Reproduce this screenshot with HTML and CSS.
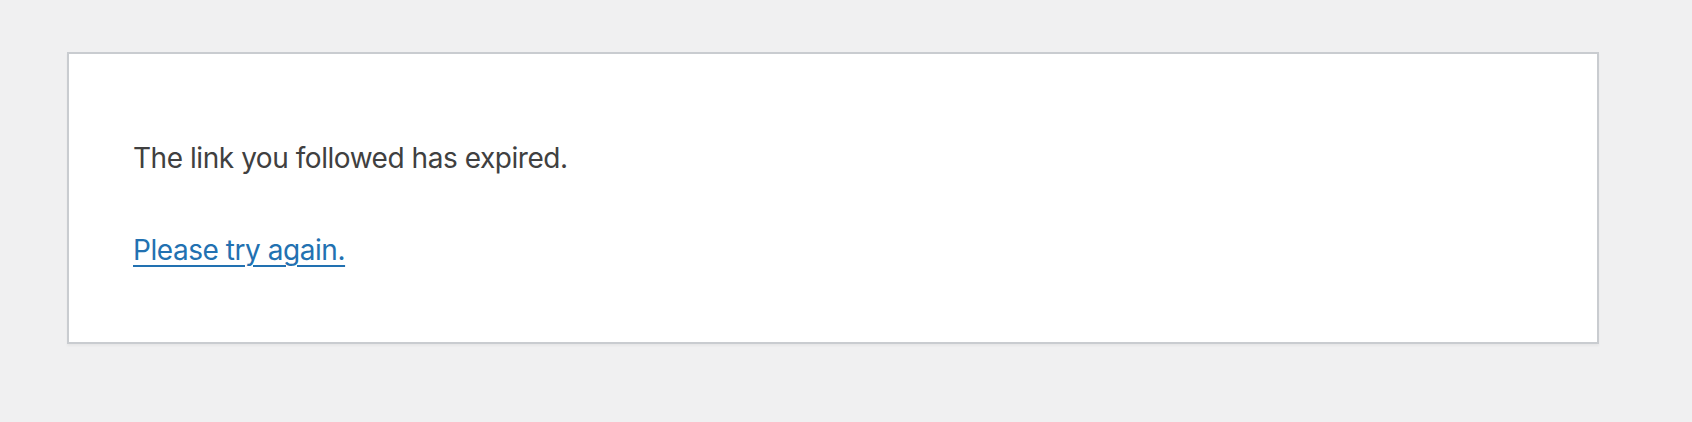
FILE: index.html
```html
<!DOCTYPE html>
<html lang="en">
<head>
<meta charset="utf-8">
<title>Something went wrong</title>
<link rel="stylesheet" href="styles.css">
</head>
<body class="error-page">
<div class="wp-die-message">The link you followed has expired.</div>
<p class="retry"><a class="retry-link" href="#">Please try again.</a></p>
</body>
</html>
```
FILE: styles.css
```css
html {
  background: #f0f0f1;
}
body.error-page {
  box-sizing: border-box;
  width: 1532px;
  margin: 52px 0 0 67px;
  padding: 32px 64px;
  background: #fff;
  border: 2px solid #c9ccd0;
  box-shadow: 0 2px 2px rgba(0, 0, 0, 0.04);
  color: #404040;
  font-family: Inter, "Noto Sans", sans-serif;
}
.wp-die-message,
.retry {
  font-size: 28px;
  line-height: 42px;
  letter-spacing: -0.45px;
  margin: 50px 0 40px;
}
.wp-die-message {
  padding-top: 1px;
  margin-bottom: 49px;
}
.retry {
  margin-bottom: 39px;
}
.retry-link {
  color: #2271b1;
  text-decoration: underline;
  text-decoration-thickness: 2px;
  text-underline-offset: 5px;
}
```
